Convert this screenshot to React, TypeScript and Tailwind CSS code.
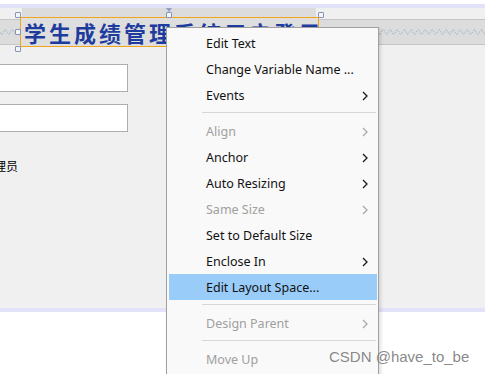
import React from "react";

type Item =
  | { kind: "item"; label: string; disabled?: boolean; sub?: boolean; active?: boolean }
  | { kind: "sep" };

const items: Item[] = [
  { kind: "item", label: "Edit Text" },
  { kind: "item", label: "Change Variable Name ..." },
  { kind: "item", label: "Events", sub: true },
  { kind: "sep" },
  { kind: "item", label: "Align", sub: true, disabled: true },
  { kind: "item", label: "Anchor", sub: true },
  { kind: "item", label: "Auto Resizing", sub: true },
  { kind: "item", label: "Same Size", sub: true, disabled: true },
  { kind: "item", label: "Set to Default Size" },
  { kind: "item", label: "Enclose In", sub: true },
  { kind: "item", label: "Edit Layout Space...", active: true },
  { kind: "sep" },
  { kind: "item", label: "Design Parent", sub: true, disabled: true },
  { kind: "sep" },
  { kind: "item", label: "Move Up", disabled: true },
];

function Chevron({ disabled }: { disabled?: boolean }) {
  return (
    <svg width="6" height="10" viewBox="0 0 6 10" className="shrink-0">
      <polyline
        points="1,1 5,5 1,9"
        fill="none"
        stroke={disabled ? "#a8a8a8" : "#1a1a1a"}
        strokeWidth="1.3"
      />
    </svg>
  );
}

function Handle({ className }: { className: string }) {
  return (
    <div
      className={`absolute w-[6px] h-[6px] bg-[#f4f6fa] border border-[#8394b4] rounded-[1px] ${className}`}
    />
  );
}

function Wave({ width }: { width: number }) {
  const pts: string[] = [];
  for (let x = 0; x <= width; x += 1) {
    const y = 4 + Math.sin((x / 7) * Math.PI * 2) * 2.5;
    pts.push(`${x},${y.toFixed(2)}`);
  }
  return (
    <svg width={width} height="8" viewBox={`0 0 ${width} 8`}>
      <polyline
        points={pts.join(" ")}
        fill="none"
        stroke="#8fa6c4"
        strokeWidth="0.9"
        strokeDasharray="1 1"
      />
    </svg>
  );
}

export default function App() {
  return (
    <div className="relative w-[485px] h-[374px] overflow-hidden bg-white font-['Noto_Sans',sans-serif]">
      {/* canvas background */}
      <div className="flex flex-col h-full">
        <div className="h-[4px] bg-white" />
        <div className="h-[4px] bg-[#e2e2f8]" />
        <div className="h-[11px] bg-[#f0f0f0] flex">
          <div className="w-[22px]" />
          <div className="w-[294px] bg-[#dcdcdc]" />
        </div>
        <div className="h-[26px] bg-[#dcdcdc] border-y border-[#c6c6c6] flex items-center justify-between">
          <Wave width={16} />
          <Wave width={107} />
        </div>
        <div className="h-[263px] bg-[#f0f0f0] flex flex-col">
          <div className="mt-[19px] w-[128px] h-[28px] bg-white border border-[#adadad] border-l-0" />
          <div className="mt-[12px] w-[128px] h-[28px] bg-white border border-[#adadad] border-l-0" />
          <div className="mt-[26px] -ml-[6px] text-[12px] leading-[16px] text-black font-['Noto_Sans_CJK_SC',sans-serif]">
            理员
          </div>
        </div>
        <div className="h-[4px] bg-[#e2e2f8]" />
        <div className="flex-1 bg-white" />
      </div>

      {/* selected label widget */}
      <div className="absolute left-[20px] top-[17px] w-[299px] h-[30px] border border-[#f2a51a] bg-[#dedede] flex items-center pl-[3px] overflow-hidden">
        <span className="whitespace-nowrap text-[22px] leading-[26px] font-bold tracking-[3px] text-[#1d3c9e] font-['Noto_Sans_CJK_SC',serif]">
          学生成绩管理系统用户登录
        </span>
      </div>
      <Handle className="left-[15px] top-[12px]" />
      <Handle className="left-[166px] top-[12px]" />
      <Handle className="left-[318px] top-[12px]" />
      <Handle className="left-[15px] top-[29px]" />
      <Handle className="left-[15px] top-[46px]" />
      <div className="absolute left-[166px] top-[8px] w-0 h-0 border-l-[3px] border-r-[3px] border-t-[4px] border-l-transparent border-r-transparent border-t-[#8ea0c0]" />

      {/* context menu */}
      <div className="absolute left-[166px] top-[27px] w-[213px] h-[360px] bg-[#f9f9f9] border border-[#a0a0a0] pt-[2px] pl-[2px] pr-[1px] shadow-[2px_2px_3px_rgba(0,0,0,0.12)]">
        {items.map((it, i) =>
          it.kind === "sep" ? (
            <div key={i} className="h-[10px] flex items-start pt-[4px]">
              <div className="ml-[33px] mr-[1px] h-px flex-1 bg-[#d7d7d7]" />
            </div>
          ) : (
            <div
              key={i}
              className={`h-[26px] flex items-center pt-[2px] pl-[37px] pr-[9px] text-[12.5px] ${
                it.active ? "bg-[#99ccf8]" : ""
              } ${it.disabled ? "text-[#a0a0a0]" : "text-[#111]"}`}
            >
              <span className="flex-1 whitespace-nowrap">{it.label}</span>
              {it.sub && <Chevron disabled={it.disabled} />}
            </div>
          )
        )}
      </div>

      {/* watermark */}
      <div className="absolute left-[329px] top-[347px] text-[15px] leading-[20px] text-[#7a7a7a]/90 font-['Liberation_Sans',Arial,sans-serif] whitespace-nowrap">
        CSDN @have_to_be
      </div>
    </div>
  );
}
